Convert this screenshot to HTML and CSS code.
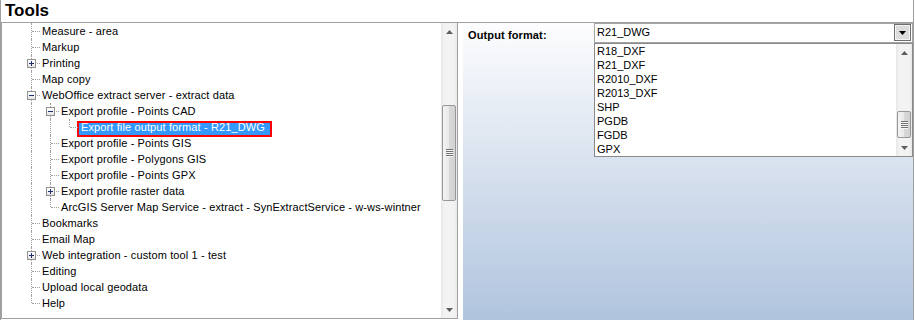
FILE: index.html
```html
<!DOCTYPE html>
<html>
<head>
<meta charset="utf-8">
<link rel="stylesheet" href="styles.css">
</head>
<body>
<div class="window">
  <div class="header">Tools</div>
  <div class="content">
    <div class="tree-panel">
      <div class="tree">
        <div class="row"><span class="cell v h"></span><span class="label">Measure - area</span></div>
        <div class="row"><span class="cell v h"></span><span class="label">Markup</span></div>
        <div class="row"><span class="cell v h"><span class="exp plus"></span></span><span class="label">Printing</span></div>
        <div class="row"><span class="cell v h"></span><span class="label">Map copy</span></div>
        <div class="row"><span class="cell v h"><span class="exp minus"></span></span><span class="label">WebOffice extract server - extract data</span></div>
        <div class="row"><span class="cell v"></span><span class="cell v h"><span class="exp minus"></span></span><span class="label">Export profile - Points CAD</span></div>
        <div class="row"><span class="cell v"></span><span class="cell v"></span><span class="cell vt h"></span><span class="label sel">Export file output format - R21_DWG</span></div>
        <div class="row"><span class="cell v"></span><span class="cell v h"></span><span class="label">Export profile - Points GIS</span></div>
        <div class="row"><span class="cell v"></span><span class="cell v h"></span><span class="label">Export profile - Polygons GIS</span></div>
        <div class="row"><span class="cell v"></span><span class="cell v h"></span><span class="label">Export profile - Points GPX</span></div>
        <div class="row"><span class="cell v"></span><span class="cell v h"><span class="exp plus"></span></span><span class="label">Export profile raster data</span></div>
        <div class="row"><span class="cell v"></span><span class="cell vt h"></span><span class="label">ArcGIS Server Map Service - extract - SynExtractService - w-ws-wintner</span></div>
        <div class="row"><span class="cell v h"></span><span class="label">Bookmarks</span></div>
        <div class="row"><span class="cell v h"></span><span class="label">Email Map</span></div>
        <div class="row"><span class="cell v h"><span class="exp plus"></span></span><span class="label">Web integration - custom tool 1 - test</span></div>
        <div class="row"><span class="cell v h"></span><span class="label">Editing</span></div>
        <div class="row"><span class="cell v h"></span><span class="label">Upload local geodata</span></div>
        <div class="row"><span class="cell vt h"></span><span class="label">Help</span></div>
      </div>
      <div class="vscroll">
        <div class="arrow"><svg width="7" height="4" viewBox="0 0 7 4"><polygon points="0,4 7,4 3.5,0" fill="#5e5e5e"/></svg></div>
        <div class="track"><div class="thumb tree-thumb"><span class="grip"></span></div></div>
        <div class="arrow"><svg width="7" height="4" viewBox="0 0 7 4"><polygon points="0,0 7,0 3.5,4" fill="#5e5e5e"/></svg></div>
      </div>
    </div>
    <div class="props">
      <div class="prop-label">Output format:</div>
      <div class="combo-wrap">
        <div class="combo">
          <span class="combo-text">R21_DWG</span>
          <span class="combo-btn"><svg width="7" height="4" viewBox="0 0 7 4"><polygon points="0,0 7,0 3.5,4" fill="#000"/></svg></span>
        </div>
        <div class="dropdown">
          <div class="items">
            <div class="item">R18_DXF</div>
            <div class="item">R21_DXF</div>
            <div class="item">R2010_DXF</div>
            <div class="item">R2013_DXF</div>
            <div class="item">SHP</div>
            <div class="item">PGDB</div>
            <div class="item">FGDB</div>
            <div class="item">GPX</div>
          </div>
          <div class="vscroll">
            <div class="arrow"><svg width="7" height="4" viewBox="0 0 7 4"><polygon points="0,4 7,4 3.5,0" fill="#5e5e5e"/></svg></div>
            <div class="track"><div class="thumb list-thumb"><span class="grip"></span></div></div>
            <div class="arrow"><svg width="7" height="4" viewBox="0 0 7 4"><polygon points="0,0 7,0 3.5,4" fill="#5e5e5e"/></svg></div>
          </div>
        </div>
      </div>
    </div>
  </div>
</div>
</body>
</html>
```
FILE: styles.css
```css
* { box-sizing: border-box; }
body {
  margin: 0;
  background: #fff;
  font-family: "Liberation Sans", Arial, sans-serif;
  font-size: 11px;
  color: #000;
}
.window {
  width: 914px;
  height: 320px;
  display: flex;
  flex-direction: column;
  border-left: 1px solid #a0a0a0;
  border-right: 1px solid #a0a0a0;
}
.header {
  height: 23px;
  flex: none;
  border-bottom: 1px solid #a0a0a0;
  padding-left: 4px;
  font-size: 17px;
  font-weight: bold;
  line-height: 21px;
}
.content {
  flex: 1;
  display: flex;
  min-height: 0;
}
.tree-panel {
  width: 457px;
  height: 296px;
  flex: none;
  display: flex;
  border: 1px solid #a0a0a0;
  border-top: 0;
}
.tree {
  flex: 1;
  overflow: hidden;
  padding-left: 19px;
}
.row {
  display: flex;
  align-items: flex-start;
  height: 16px;
  white-space: nowrap;
}
.cell {
  position: relative;
  width: 19px;
  height: 16px;
  flex: none;
}
.cell.v::before,
.cell.vt::before {
  content: "";
  position: absolute;
  left: 10px;
  top: 0;
  bottom: 0;
  border-left: 1px dotted #a0a0a0;
}
.cell.vt::before { bottom: 8px; }
.cell.h::after {
  content: "";
  position: absolute;
  left: 11px;
  right: 0;
  top: 8px;
  border-top: 1px dotted #a0a0a0;
}
.exp {
  position: absolute;
  left: 6px;
  top: 4px;
  width: 9px;
  height: 9px;
  z-index: 1;
  border: 1px solid #919191;
  background: linear-gradient(#ffffff, #e4e4e4);
}
.exp::before {
  content: "";
  position: absolute;
  left: 1px;
  top: 3px;
  width: 5px;
  height: 1px;
  background: #1e2f78;
}
.exp.plus::after {
  content: "";
  position: absolute;
  left: 3px;
  top: 1px;
  width: 1px;
  height: 5px;
  background: #1e2f78;
}
.label {
  padding: 0 2px;
  line-height: 16px;
  letter-spacing: 0.12px;
}
.label.sel {
  margin-left: -1px;
  margin-top: 2px;
  line-height: 9px;
  padding: 0 5px 3px 2px;
  border: 2px solid #ff0000;
  background: #3399ff;
  color: #fff;
}

/* scrollbars */
.vscroll {
  width: 16px;
  flex: none;
  display: flex;
  flex-direction: column;
  background: linear-gradient(to right, #e6e6e6, #f3f3f3 20%, #f3f3f3 80%, #e9e9e9);
}
.arrow {
  height: 17px;
  flex: none;
  display: flex;
  align-items: center;
  justify-content: center;
}
.arrow svg { display: block; }
.track {
  flex: 1;
  display: flex;
  flex-direction: column;
}
.thumb {
  margin: 0 1px;
  border: 1px solid #979797;
  border-radius: 2px;
  background: linear-gradient(to right, #f4f4f4, #e8e8e8 50%, #d9d9d9 51%, #d2d2d2);
  display: flex;
  align-items: center;
  justify-content: center;
  flex: none;
}
.tree-thumb { margin-top: 65px; height: 96px; }
.list-thumb { margin-top: 50px; height: 27px; }
.grip {
  width: 7px;
  height: 8px;
  background: repeating-linear-gradient(#707070 0 1px, #f8f8f8 1px 2px);
}

/* properties panel */
.props {
  flex: 1;
  margin-left: 5px;
  background: linear-gradient(#fdfdfe, #b0c4de);
  display: grid;
  grid-template-columns: 126px 1fr;
  align-items: start;
  padding-left: 5px;
}
.prop-label {
  margin-top: 4px;
  font-weight: bold;
  line-height: 16px;
  letter-spacing: 0.12px;
}
.combo-wrap { position: relative; }
.combo {
  height: 20px;
  border: 1px solid #a5a5a5;
  background: #fff;
  display: flex;
  align-items: flex-start;
  justify-content: space-between;
  padding: 0 1px 0 2px;
}
.combo-text { line-height: 16px; }
.combo-btn {
  width: 17px;
  height: 17px;
  border: 1px solid #6f6f6f;
  box-shadow: inset 0 0 0 1px #f4f4f4;
  background: #dcdcdc;
  display: flex;
  align-items: center;
  justify-content: center;
  padding-top: 1px;
}
.combo-btn svg { display: block; }
.dropdown {
  position: absolute;
  top: 20px;
  left: 0;
  right: 0;
  height: 114px;
  border: 1px solid #8a8a8a;
  background: #fff;
  display: flex;
  z-index: 2;
}
.items {
  flex: 1;
  padding-left: 2px;
}
.item { line-height: 14px; height: 14px; }
```
